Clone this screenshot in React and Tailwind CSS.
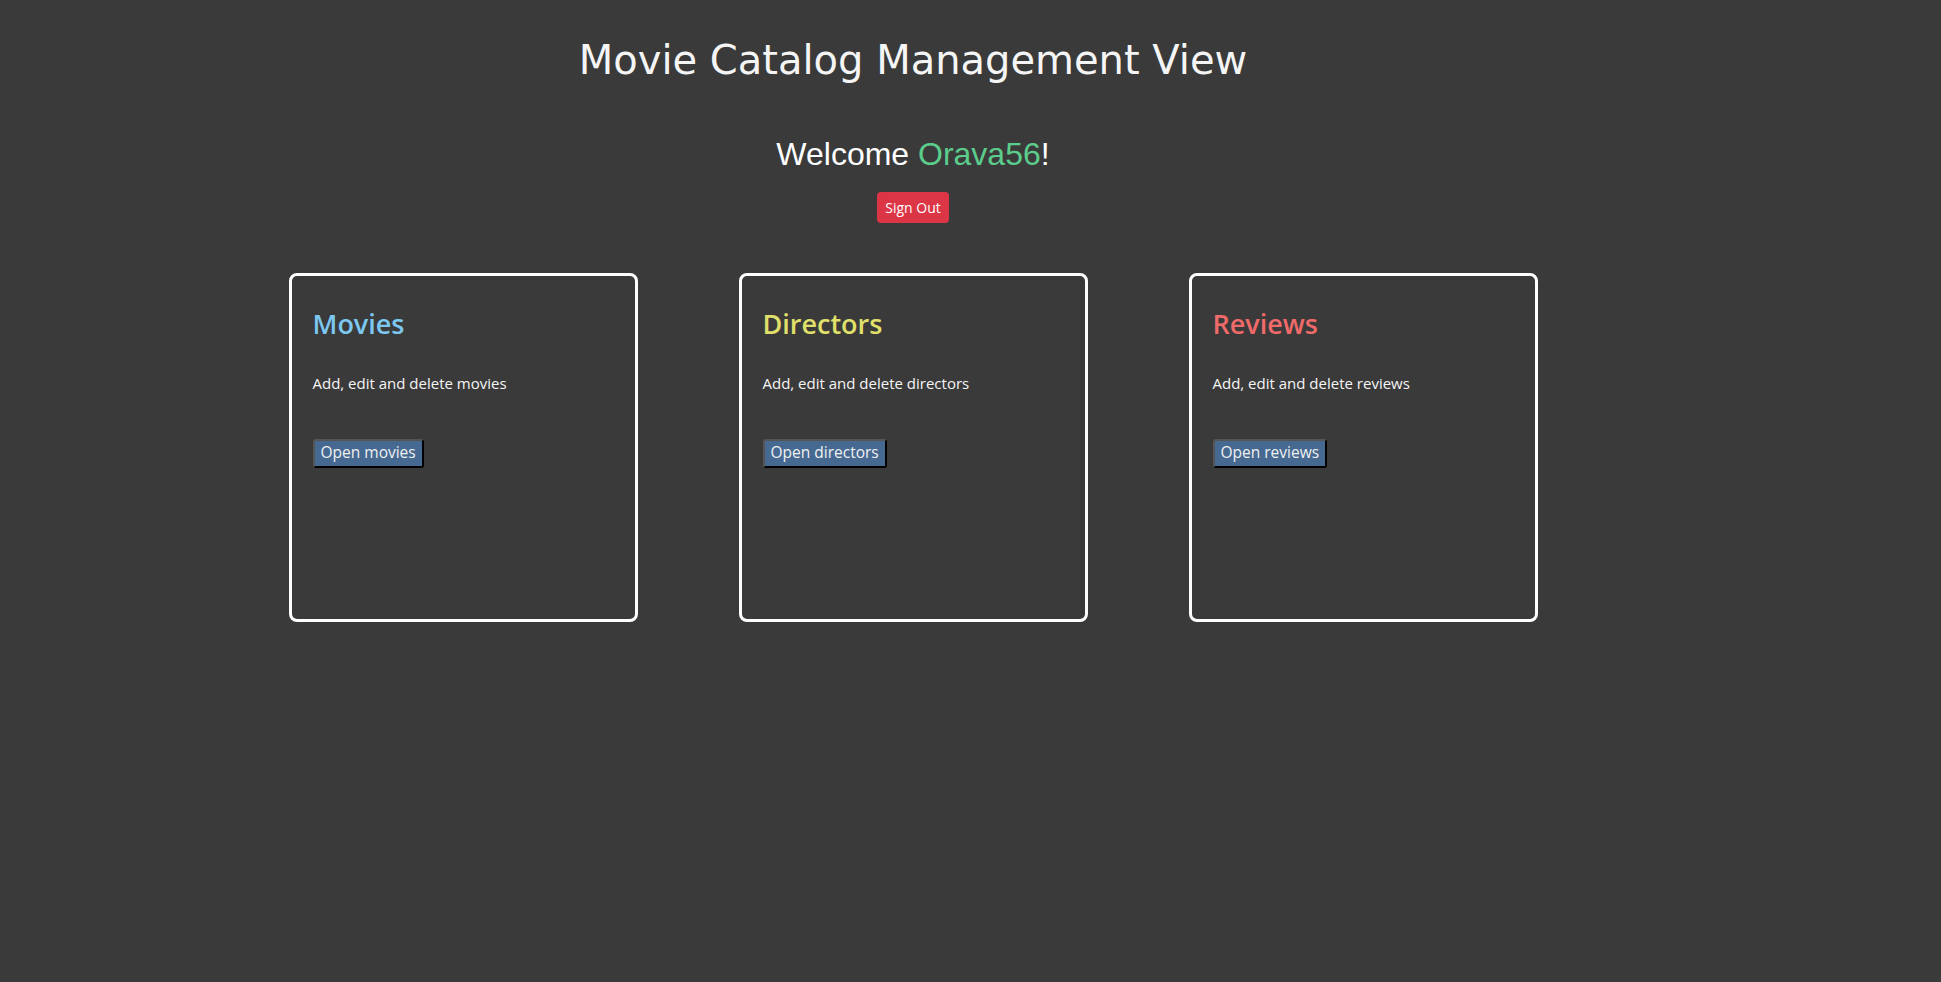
import React from "react";

// sections shown on the dashboard
const SECTIONS = [
    { title: "Movies", desc: "Add, edit and delete movies", button: "Open movies", color: "text-[#7cc8f0]" },
    { title: "Directors", desc: "Add, edit and delete directors", button: "Open directors", color: "text-[#e0e06a]" },
    { title: "Reviews", desc: "Add, edit and delete reviews", button: "Open reviews", color: "text-[#f06a6a]" },
];

export default function App() {
    return (
        <div className="min-h-screen bg-[#3a3a3a] text-white">
            <div className="w-[1826px] flex flex-col items-center">
                <h1 className="mt-[36px] text-[40px] leading-[48px] text-[#f5f5f5] font-['DejaVu_Sans',sans-serif]">
                    Movie Catalog Management View
                </h1>

                <h2 className="mt-[52px] text-[32px] leading-[36px] font-['Liberation_Sans',Arial,sans-serif]">
                    Welcome <span className="text-[#5ccc8c]">Orava56</span>!
                </h2>

                <button className="mt-[20px] h-[31px] px-[8px] rounded bg-[#dc3545] text-[14px] text-white font-['Open_Sans',sans-serif]">
                    Sign Out
                </button>

                {/* cards */}
                <div className="mt-[50px] flex gap-[101px]">
                    {SECTIONS.map((s) => (
                        <div
                            key={s.title}
                            className="w-[349px] h-[349px] border-[3px] border-white rounded-lg px-[21px] pt-[30px] font-['Open_Sans',sans-serif]"
                        >
                            <h3 className={`text-[27px] leading-[36px] font-semibold ${s.color}`}>{s.title}</h3>
                            <p className="mt-[30px] text-[15px] text-[#f5f5f5]">{s.desc}</p>
                            <button className="mt-[44px] h-[29px] px-[6px] bg-[#456990] text-[15.5px] text-[#f0f0f0] rounded-[3px] border-2 border-t-[#555] border-l-[#555] border-b-black border-r-black leading-none">
                                {s.button}
                            </button>
                        </div>
                    ))}
                </div>
            </div>
        </div>
    );
}
